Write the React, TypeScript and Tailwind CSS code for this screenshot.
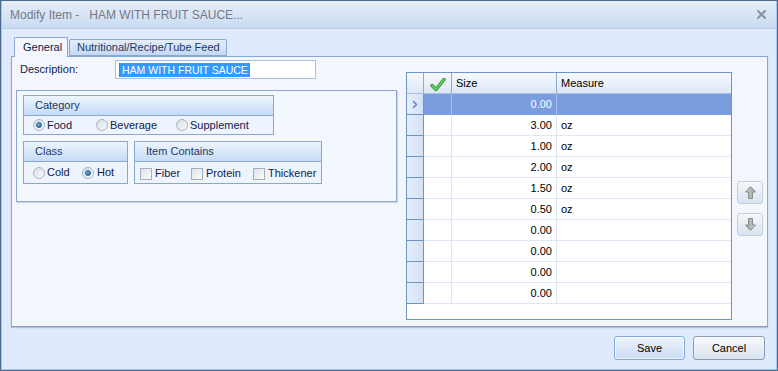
import React from 'react';

const rows = [
  { size: '0.00', measure: '', selected: true },
  { size: '3.00', measure: 'oz' },
  { size: '1.00', measure: 'oz' },
  { size: '2.00', measure: 'oz' },
  { size: '1.50', measure: 'oz' },
  { size: '0.50', measure: 'oz' },
  { size: '0.00', measure: '' },
  { size: '0.00', measure: '' },
  { size: '0.00', measure: '' },
  { size: '0.00', measure: '' },
];

function Radio({ checked }: { checked?: boolean }) {
  return (
    <span className="flex h-[12px] w-[12px] shrink-0 items-center justify-center rounded-full border border-[#a9b5c3] bg-gradient-to-br from-[#d9dee4] to-[#fbfcfd]">
      {checked && (
        <span className="h-[6px] w-[6px] rounded-full border border-[#1e5f95] bg-gradient-to-br from-[#7fc4f0] to-[#1a6fb0]" />
      )}
    </span>
  );
}

function Checkbox() {
  return (
    <span className="h-[12px] w-[12px] shrink-0 border border-[#a4b0bf] bg-gradient-to-br from-[#dde2e8] to-[#fbfcfd]" />
  );
}

function GroupBox({
  title,
  className,
  children,
}: {
  title: string;
  className: string;
  children: React.ReactNode;
}) {
  return (
    <div className={`flex flex-col border border-[#8ba7cf] bg-[#eef4fd] ${className}`}>
      <div className="flex h-[20px] shrink-0 items-center border-b border-[#8ba7cf] bg-gradient-to-b from-[#eef5fd] to-[#c5dbf6] pl-[11px] text-[#1e3a66]">
        {title}
      </div>
      <div className="flex flex-1 items-center">{children}</div>
    </div>
  );
}

function ArrowButton({ down }: { down?: boolean }) {
  return (
    <button className="flex h-[23px] w-[26px] items-center justify-center rounded-[3px] border border-[#c2cfdf] bg-gradient-to-b from-[#f5f8fc] to-[#d8e3f0]">
      <svg width="11" height="13" viewBox="0 0 11 13" className={down ? 'rotate-180' : ''}>
        <defs>
          <linearGradient id={down ? 'ad' : 'au'} x1="0" y1="0" x2="1" y2="0">
            <stop offset="0" stopColor="#d4d4d4" />
            <stop offset="1" stopColor="#9a9a9a" />
          </linearGradient>
        </defs>
        <polygon
          points="5.5,0.5 10.5,6 7.5,6 7.5,12.5 3.5,12.5 3.5,6 0.5,6"
          fill={`url(#${down ? 'ad' : 'au'})`}
          stroke="#8c8c8c"
          strokeWidth="1"
          strokeLinejoin="round"
        />
      </svg>
    </button>
  );
}

export default function App() {
  return (
    <div className="h-[371px] w-[778px] bg-[#4a6a94] p-px font-['Liberation_Sans',Arial,sans-serif] text-[11px] text-[#10204a]">
      <div className="flex h-full flex-col border-x border-b border-[#a8c5ec] bg-[#dfebfc]">
        {/* Title bar */}
        <div className="flex h-[28px] shrink-0 items-center justify-between border-b border-[#b4cdec] bg-gradient-to-b from-[#e6eef9] to-[#c9dbf2] pl-[8px] pr-[10px]">
          <span className="whitespace-pre text-[12px] text-[#737a85]">Modify Item -   HAM WITH FRUIT SAUCE...</span>
          <svg width="9" height="9" viewBox="0 0 9 9">
            <path d="M1 1 L8 8 M8 1 L1 8" stroke="#8794a4" strokeWidth="2" strokeLinecap="square" />
          </svg>
        </div>

        <div className="flex flex-1 flex-col pl-[9px] pr-[8px]">
          {/* Tabs */}
          <div className="mt-[8px] flex items-end gap-[1px] pl-[3px]">
            <div className="z-10 -mb-px flex h-[20px] w-[54px] items-center rounded-t-[2px] border border-b-0 border-[#8ba7cf] bg-[#f3f7fd] pl-[8px] text-[#10204a]">
              General
            </div>
            <div className="flex h-[17px] w-[158px] items-center rounded-t-[2px] border border-[#8ba7cf] bg-gradient-to-b from-[#e4eefb] to-[#c4d8f3] pl-[7px] text-[#1e3a66]">
              Nutritional/Recipe/Tube Feed
            </div>
          </div>

          {/* Tab page */}
          <div className="flex h-[271px] border border-[#8ba7cf] border-b-[#8d9fbc] bg-[#f3f7fd] pl-[4px] pt-[3px] shadow-[0_1px_1px_rgba(120,145,190,0.45)]">
            <div className="flex w-[381px] shrink-0 flex-col">
              <div className="flex h-[19px] items-center">
                <span className="w-[99px] pl-[4px] text-[#10204a]">Description:</span>
                <div className="flex h-[19px] w-[201px] items-center border border-[#abc1de] bg-white pl-[3px]">
                  <span className="border-l border-[#b5651d] bg-[#3399ff] px-[2px] text-[10.5px] leading-[14px] text-white">
                    HAM WITH FRUIT SAUCE
                  </span>
                </div>
              </div>

              <div className="mt-[11px] h-[112px] border border-[#8ba7cf] bg-[#f3f7fe] pl-[6px] pt-[4px] shadow-[1px_1px_1px_rgba(150,170,205,0.4)]">
                <GroupBox title="Category" className="h-[40px] w-[251px]">
                  <div className="flex items-center pl-[9px]">
                    <label className="flex w-[63px] items-center gap-[2px]">
                      <Radio checked />
                      <span>Food</span>
                    </label>
                    <label className="flex w-[80px] items-center gap-[2px]">
                      <Radio />
                      <span>Beverage</span>
                    </label>
                    <label className="flex items-center gap-[2px]">
                      <Radio />
                      <span>Supplement</span>
                    </label>
                  </div>
                </GroupBox>

                <div className="mt-[6px] flex gap-[6px]">
                  <GroupBox title="Class" className="h-[43px] w-[105px]">
                    <div className="flex items-center pl-[9px]">
                      <label className="flex w-[49px] items-center gap-[2px]">
                        <Radio />
                        <span>Cold</span>
                      </label>
                      <label className="flex items-center gap-[3px]">
                        <Radio checked />
                        <span>Hot</span>
                      </label>
                    </div>
                  </GroupBox>
                  <GroupBox title="Item Contains" className="h-[43px] w-[188px]">
                    <div className="flex items-center pl-[5px] pt-[2px]">
                      <label className="flex w-[51px] items-center gap-[3px]">
                        <Checkbox />
                        <span>Fiber</span>
                      </label>
                      <label className="flex w-[62px] items-center gap-[3px]">
                        <Checkbox />
                        <span>Protein</span>
                      </label>
                      <label className="flex items-center gap-[3px]">
                        <Checkbox />
                        <span>Thickener</span>
                      </label>
                    </div>
                  </GroupBox>
                </div>
              </div>
            </div>

            {/* Grid */}
            <div className="ml-[9px] mt-[12px] flex h-[248px] w-[326px] shrink-0 flex-col border border-[#6d94c7] bg-white text-black">
              <div className="flex h-[21px] shrink-0 border-b border-[#a9c2e4] bg-gradient-to-b from-[#f7fafe] to-[#dce7f6]">
                <div className="w-[17px] border-r border-[#8daad3]" />
                <div className="flex w-[28px] items-end justify-center border-r border-[#8daad3] pb-[1px]">
                  <svg width="16" height="15" viewBox="0 0 16 15">
                    <path d="M2 8.5 L6 12.5 L14 2.5" fill="none" stroke="#2f8a2f" strokeWidth="3.4" strokeLinecap="round" strokeLinejoin="round" />
                    <path d="M2 8.5 L6 12.5 L14 2.5" fill="none" stroke="#5fd05a" strokeWidth="2" strokeLinecap="round" strokeLinejoin="round" />
                  </svg>
                </div>
                <div className="flex w-[105px] items-center border-r border-[#8daad3] pl-[4px]">Size</div>
                <div className="flex flex-1 items-center pl-[4px]">Measure</div>
              </div>
              {rows.map((r, i) => (
                <div key={i} className={`flex h-[21px] shrink-0 ${r.selected ? 'bg-[#7b9ddf] text-white' : ''}`}>
                  <div className="flex w-[17px] items-center justify-center border-b border-r border-[#6d94c7] bg-gradient-to-r from-[#e6eefa] to-[#d3e1f5]">
                    {r.selected && (
                      <svg width="6" height="9" viewBox="0 0 6 9">
                        <path d="M1 1 L4.5 4.5 L1 8" fill="none" stroke="#5a8fd6" strokeWidth="1.6" />
                      </svg>
                    )}
                  </div>
                  <div className={`w-[28px] border-b border-r ${r.selected ? 'border-[#7b9ddf] border-r-[#a8bdeb]' : 'border-[#dde7f5]'}`} />
                  <div className={`flex w-[105px] items-center justify-end border-b border-r pr-[4px] ${r.selected ? 'border-[#7b9ddf] border-r-[#a8bdeb]' : 'border-[#dde7f5]'}`}>
                    {r.size}
                  </div>
                  <div className={`flex flex-1 items-center border-b pl-[4px] ${r.selected ? 'border-[#7b9ddf]' : 'border-[#dde7f5]'}`}>
                    {r.measure}
                  </div>
                </div>
              ))}
            </div>

            {/* Move buttons */}
            <div className="ml-[5px] mt-[121px] flex flex-col gap-[9px]">
              <ArrowButton />
              <ArrowButton down />
            </div>
          </div>

          {/* Footer */}
          <div className="mt-[9px] flex justify-end gap-[8px] pr-[3px]">
            <button className="h-[24px] w-[71px] rounded-[3px] border border-[#86a9d8] bg-gradient-to-b from-[#eef4fc] to-[#cbdcf2] text-[11px] text-black shadow-[inset_0_0_0_1px_rgba(255,255,255,0.6)]">
              Save
            </button>
            <button className="h-[24px] w-[72px] rounded-[3px] border border-[#8b9cb3] bg-gradient-to-b from-[#f7f9fc] to-[#dbe3ee] text-[11px] text-black">
              Cancel
            </button>
          </div>
        </div>
      </div>
    </div>
  );
}
